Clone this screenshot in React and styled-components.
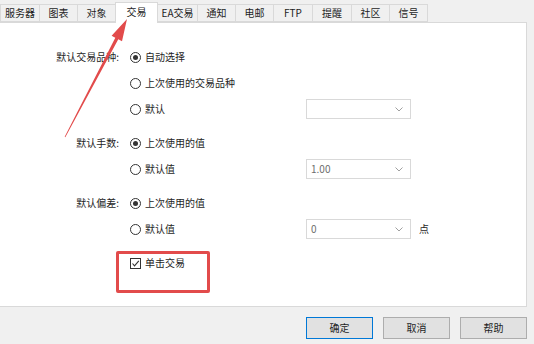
import React from "react";
import styled, { createGlobalStyle } from "styled-components";

const Global = createGlobalStyle`
  html, body { margin: 0; padding: 0; background: #f0f0f0; }
  body { font-family: "Noto Sans CJK SC", "Noto Sans", sans-serif; font-size: 10px; color: #1e1e1e; }
`;

const Window = styled.div`
  position: relative;
  width: 534px;
  height: 344px;
  background: #f0f0f0;
  overflow: hidden;
  display: flex;
  flex-direction: column;
`;

const TabBar = styled.div`
  display: flex;
  align-items: flex-end;
  height: 22px;
  position: relative;
  z-index: 1;
`;

const Tab = styled.div`
  width: ${(p) => p.w}px;
  height: ${(p) => (p.active ? 21 : 18)}px;
  margin-left: -1px;
  margin-bottom: ${(p) => (p.active ? -1 : 0)}px;
  box-sizing: border-box;
  border: 1px solid #d9d9d9;
  border-bottom: ${(p) => (p.active ? "none" : "1px solid #d9d9d9")};
  background: ${(p) => (p.active ? "#ffffff" : "#f0f0f0")};
  display: flex;
  align-items: center;
  justify-content: center;
  font-size: 10px;
  line-height: 14px;
  padding-bottom: ${(p) => (p.active ? 3 : 0)}px;
  color: #1e1e1e;
  &:first-child { margin-left: 0; }
`;

const Panel = styled.div`
  box-sizing: border-box;
  height: 285px;
  margin-right: 7px;
  background: #ffffff;
  border: 1px solid #d9d9d9;
  border-left: none;
  padding-top: 21px;
  display: flex;
  flex-direction: column;
`;

const Row = styled.div`
  display: grid;
  grid-template-columns: 130px 176px 105px auto;
  align-items: center;
  height: 26px;
  margin-top: ${(p) => (p.gap ? 8 : 0)}px;
`;

const Label = styled.div`
  text-align: right;
  padding-right: 11px;
  line-height: 14px;
`;

const Option = styled.label`
  display: flex;
  align-items: center;
  gap: 4px;
  line-height: 14px;
`;

const Radio = styled.span`
  box-sizing: border-box;
  width: 11px;
  height: 11px;
  border-radius: 50%;
  border: 1px solid #333333;
  display: flex;
  align-items: center;
  justify-content: center;
  &::after {
    content: "";
    display: ${(p) => (p.checked ? "block" : "none")};
    width: 5px;
    height: 5px;
    border-radius: 50%;
    background: #333333;
  }
`;

const Box = styled.span`
  box-sizing: border-box;
  width: 11px;
  height: 11px;
  border: 1px solid #333333;
  display: flex;
  align-items: center;
  justify-content: center;
`;

const Select = styled.div`
  box-sizing: border-box;
  width: 105px;
  height: 20px;
  border: 1px solid #d9d9d9;
  background: #ffffff;
  display: flex;
  align-items: center;
  justify-content: space-between;
  padding: 0 7px 0 4px;
  color: #6d6d6d;
  font-size: 10px;
  line-height: 14px;
`;

const Unit = styled.span`
  padding-left: 8px;
  line-height: 14px;
`;

const Footer = styled.div`
  display: flex;
  justify-content: flex-end;
  gap: 10px;
  padding: 10px 7px 0 0;
`;

const Button = styled.div`
  box-sizing: border-box;
  width: 67px;
  height: 22px;
  background: #e1e1e1;
  border: 1px solid ${(p) => (p.primary ? "#0078d7" : "#adadad")};
  display: flex;
  align-items: center;
  justify-content: center;
  font-size: 10px;
  line-height: 14px;
  color: #1e1e1e;
`;

const Highlight = styled.div`
  position: absolute;
  left: 116px;
  top: 251px;
  width: 94px;
  height: 42px;
  box-sizing: border-box;
  border: 3px solid #e24b4b;
  border-radius: 2px;
  pointer-events: none;
`;

const Overlay = styled.svg`
  position: absolute;
  left: 0;
  top: 0;
  width: 534px;
  height: 344px;
  pointer-events: none;
  z-index: 2;
`;

const Chevron = () => (
  <svg width="8" height="5" viewBox="0 0 8 5">
    <polyline points="0.5,0.5 4,4 7.5,0.5" fill="none" stroke="#a0a0a0" strokeWidth="1" />
  </svg>
);

const tabs = [
  ["服务器", 40],
  ["图表", 39],
  ["对象", 39],
  ["交易", 43, true],
  ["EA交易", 41],
  ["通知", 39],
  ["电邮", 39],
  ["FTP", 40],
  ["提醒", 40],
  ["社区", 39],
  ["信号", 39],
];

export default function App() {
  return (
    <Window>
      <Global />
      <TabBar>
        {tabs.map(([t, w, a]) => (
          <Tab key={t} w={w} active={a}>
            {t}
          </Tab>
        ))}
      </TabBar>
      <Panel>
        <Row>
          <Label>默认交易品种:</Label>
          <Option><Radio checked />自动选择</Option>
        </Row>
        <Row>
          <Label />
          <Option><Radio />上次使用的交易品种</Option>
        </Row>
        <Row>
          <Label />
          <Option><Radio />默认</Option>
          <Select><span /><Chevron /></Select>
        </Row>
        <Row gap>
          <Label>默认手数:</Label>
          <Option><Radio checked />上次使用的值</Option>
        </Row>
        <Row>
          <Label />
          <Option><Radio />默认值</Option>
          <Select><span>1.00</span><Chevron /></Select>
        </Row>
        <Row gap>
          <Label>默认偏差:</Label>
          <Option><Radio checked />上次使用的值</Option>
        </Row>
        <Row>
          <Label />
          <Option><Radio />默认值</Option>
          <Select><span>0</span><Chevron /></Select>
          <Unit>点</Unit>
        </Row>
        <Row gap>
          <Label />
          <Option>
            <Box>
              <svg width="9" height="9" viewBox="0 0 9 9">
                <polyline points="1.5,4.5 3.5,6.8 7.8,1.8" fill="none" stroke="#333" strokeWidth="1.1" />
              </svg>
            </Box>
            单击交易
          </Option>
        </Row>
      </Panel>
      <Footer>
        <Button primary>确定</Button>
        <Button>取消</Button>
        <Button>帮助</Button>
      </Footer>
      <Highlight />
      <Overlay viewBox="0 0 534 344">
        <polygon
          points="64.7,136.8 115.3,37.7 111.6,35.8 127,19 122,41.2 118.3,39.3 65.3,137.2"
          fill="#e24b4b"
        />
      </Overlay>
    </Window>
  );
}
